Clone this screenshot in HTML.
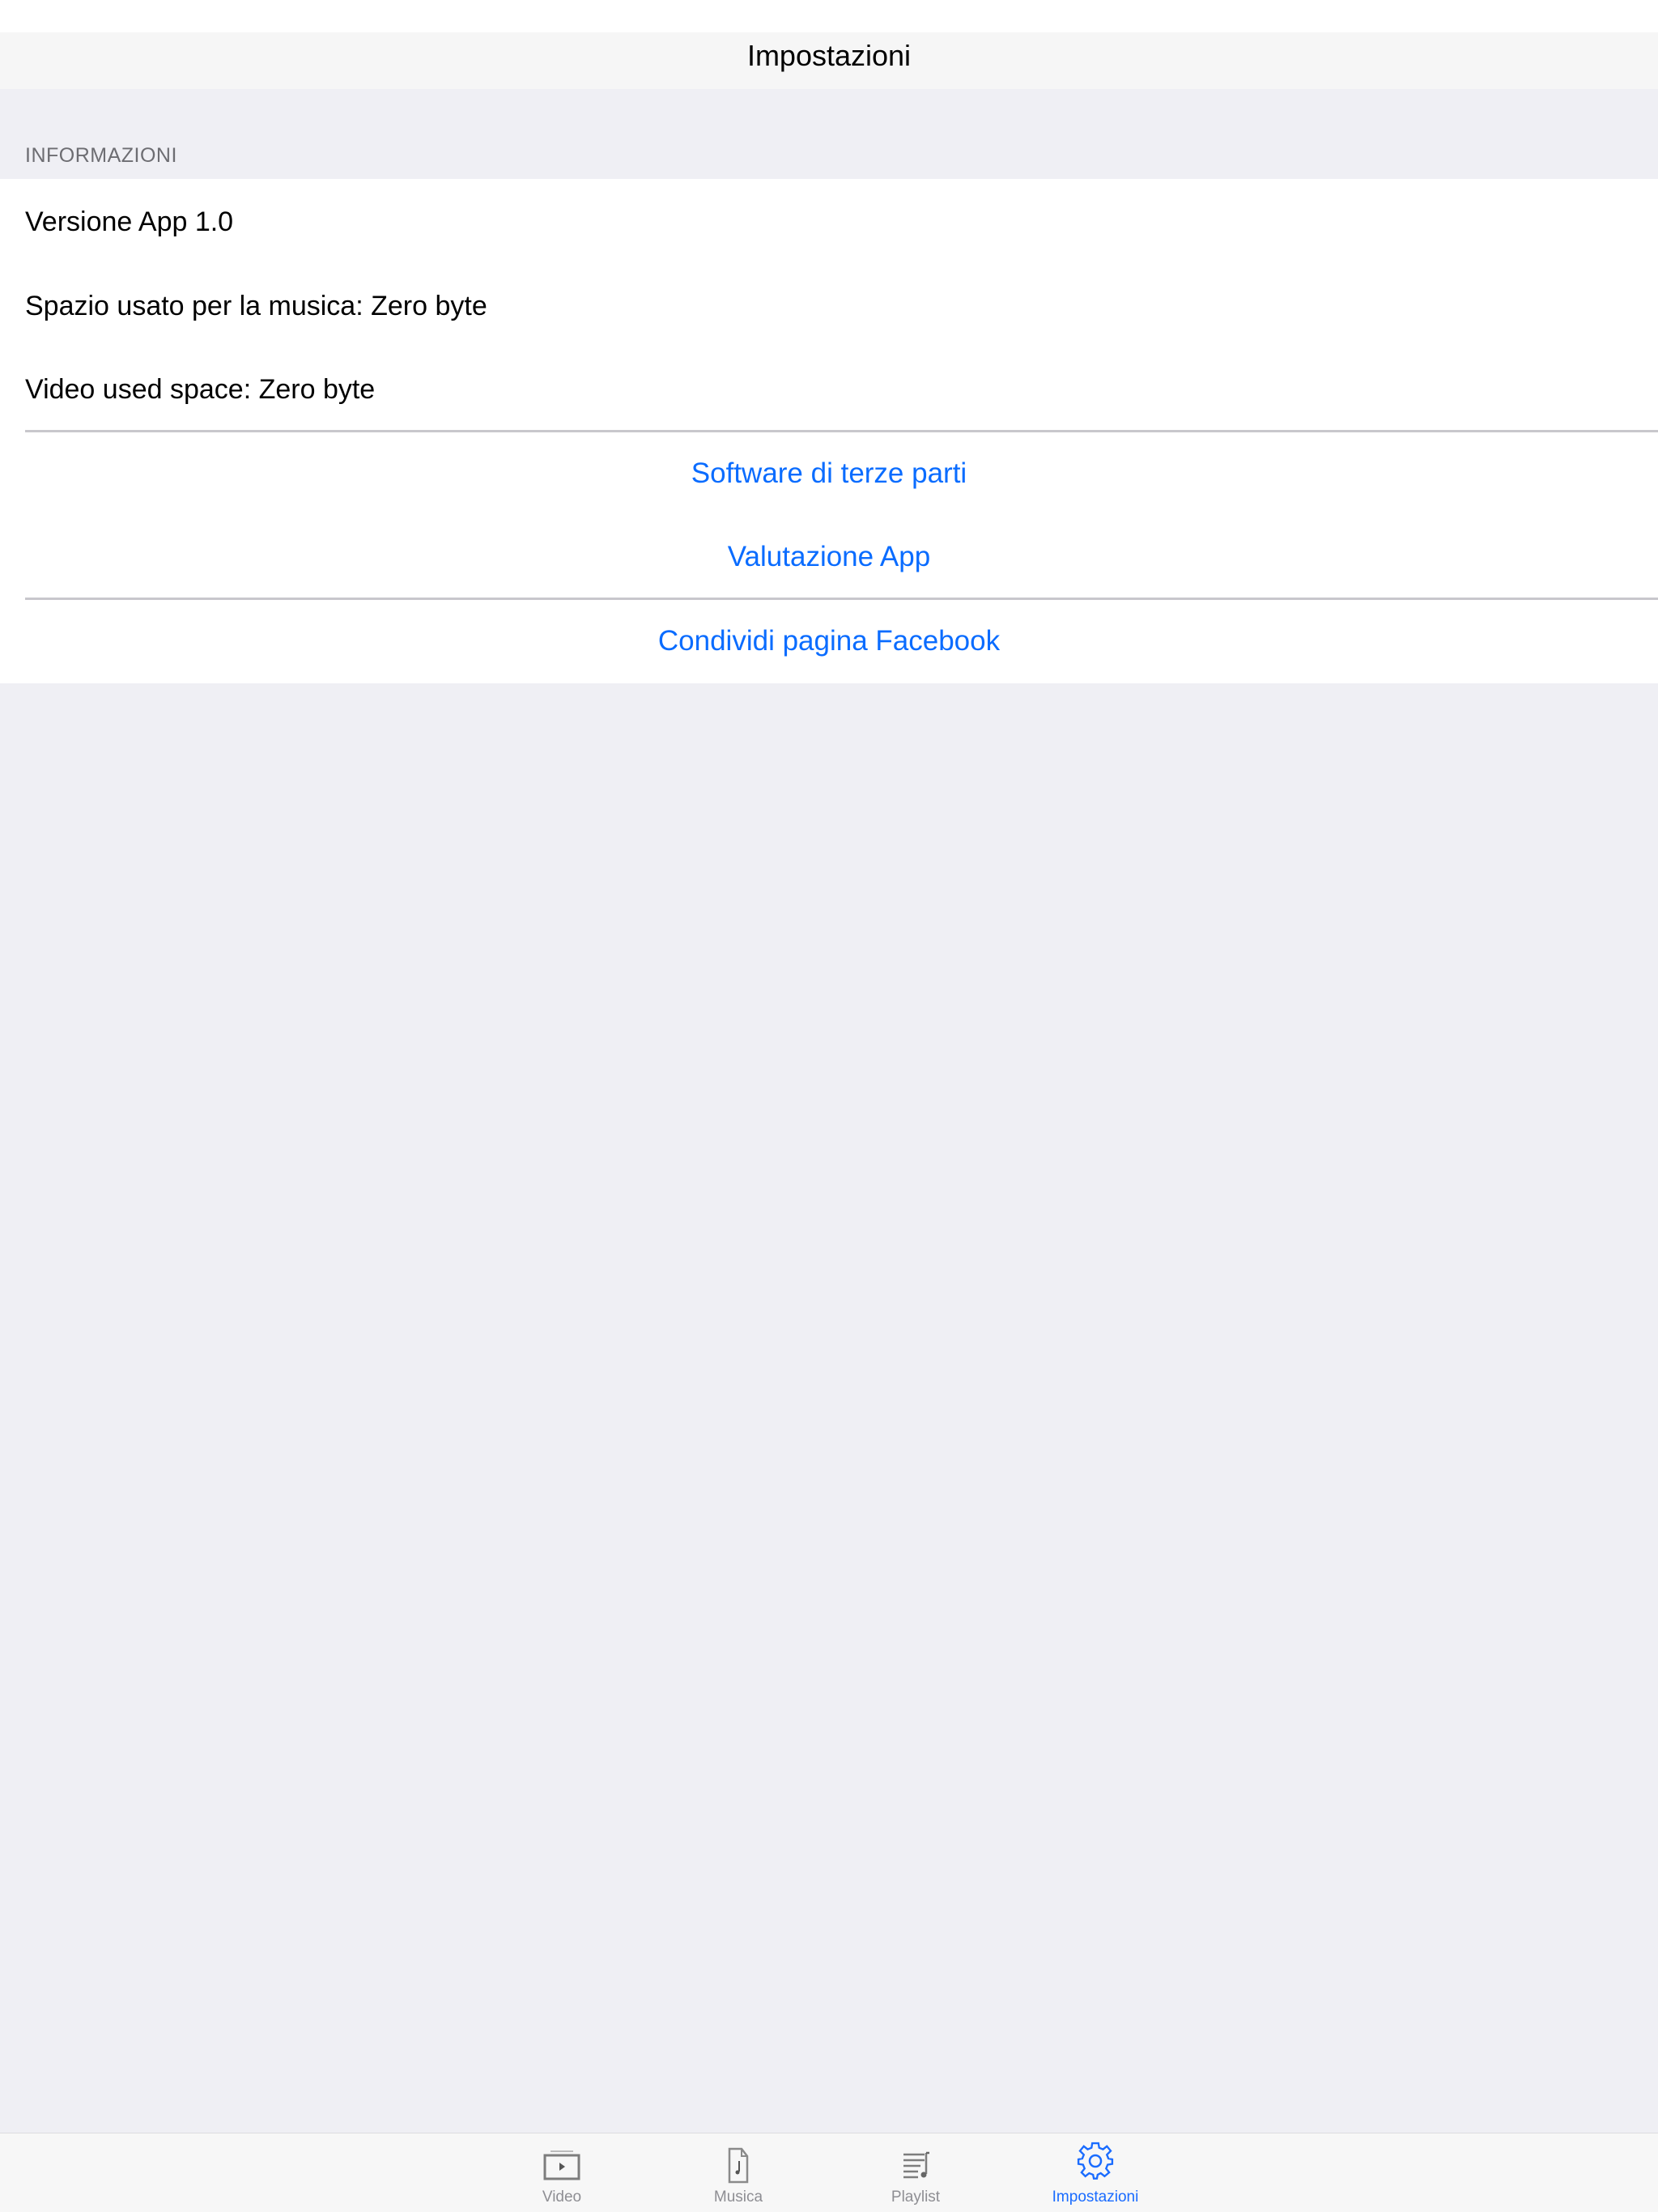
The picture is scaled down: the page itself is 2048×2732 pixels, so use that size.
<!DOCTYPE html>
<html><head><meta charset="utf-8">
<style>
*{margin:0;padding:0;box-sizing:border-box}
html,body{width:2048px;height:2732px;overflow:hidden}
body{background:#efeff4;font-family:"Liberation Sans",sans-serif;position:relative}
.status{position:absolute;left:0;top:0;width:2048px;height:40px;background:#fff}
.nav{position:absolute;left:0;top:40px;width:2048px;height:70px;background:#f6f6f6}
.nav .t{position:absolute;left:0;right:0;top:-6px;line-height:70px;text-align:center;font-size:36px;color:#000}
.hdr{position:absolute;left:31px;top:178px;font-size:25px;color:#6d6d72;letter-spacing:0.5px}
.group{position:absolute;left:0;top:221px;width:2048px;height:623px;background:#fff}
.row{position:absolute;left:0;width:2048px;height:103px;line-height:107px;font-size:34px;color:#000;padding-left:31px}
.link{text-align:center;padding-left:0;color:#0a6cff;line-height:103px;font-size:35px}
.sep{position:absolute;left:31px;right:0;height:3px;background:#c8c7cc}
.tab{position:absolute;left:0;top:2634px;width:2048px;height:98px;background:#f7f7f7;border-top:1px solid #dcdce0}
.ti{position:absolute;top:0;width:200px;height:98px;text-align:center}
.ti svg{position:absolute;left:70px;top:10px}
.ti span{position:absolute;left:0;right:0;top:68px;font-size:19px;color:#8e8e93}
</style></head><body>
<div class="status"></div>
<div class="nav"><div class="t">Impostazioni</div></div>
<div class="hdr">INFORMAZIONI</div>
<div class="group">
<div class="row" style="top:0">Versione App 1.0</div>
<div class="row" style="top:104px">Spazio usato per la musica: Zero byte</div>
<div class="row" style="top:207px">Video used space: Zero byte</div>
<div class="sep" style="top:310px"></div>
<div class="row link" style="top:312px">Software di terze parti</div>
<div class="row link" style="top:415px">Valutazione App</div>
<div class="sep" style="top:517px"></div>
<div class="row link" style="top:519px">Condividi pagina Facebook</div>
</div>
<div class="tab">
<div class="ti" style="left:594px">
<svg width="60" height="56" viewBox="0 0 60 56"><line x1="16" y1="12" x2="44" y2="12" stroke="#bbb" stroke-width="2"/><rect x="9" y="17" width="42" height="29" fill="none" stroke="#7d7d7d" stroke-width="3"/><polygon points="27,26 27,36 34,31" fill="#555"/></svg>
<span>Video</span></div>
<div class="ti" style="left:812px">
<svg width="60" height="56" viewBox="0 0 60 56"><path d="M19 9 H34 L41 18 V50 H19 Z" fill="none" stroke="#8a8a8a" stroke-width="2.5"/><path d="M34 9 V18 H41" fill="none" stroke="#8a8a8a" stroke-width="2"/><path d="M31 24 V37" stroke="#555" stroke-width="2"/><circle cx="29" cy="38" r="2.5" fill="#555"/></svg>
<span>Musica</span></div>
<div class="ti" style="left:1031px">
<svg width="60" height="56" viewBox="0 0 60 56"><g stroke="#7d7d7d" stroke-width="2.5"><line x1="15" y1="16" x2="41" y2="16"/><line x1="15" y1="23" x2="41" y2="23"/><line x1="15" y1="30" x2="36" y2="30"/><line x1="15" y1="37" x2="33" y2="37"/><line x1="15" y1="44" x2="33" y2="44"/><line x1="43" y1="14" x2="43" y2="40"/></g><circle cx="40" cy="41" r="3.5" fill="#666"/><line x1="43" y1="14" x2="47" y2="14" stroke="#666" stroke-width="2.5"/></svg>
<span>Playlist</span></div>
<div class="ti" style="left:1253px">
<svg width="60" height="56" viewBox="0 0 60 56"><g transform="translate(30,24)" fill="none" stroke="#1a6cff" stroke-width="2.5"><path d="M-4,-20 L4,-20 L5,-14 L10,-12 L15,-16 L20,-10 L15,-5 L17,0 L22,1 L22,7 L16,8 L14,13 L18,18 L12,23 L7,19 L3,21 L2,26 L-2,26 L-3,21 L-8,19 L-13,23 L-18,18 L-14,13 L-16,8 L-22,7 L-22,1 L-17,0 L-15,-5 L-20,-10 L-15,-16 L-10,-12 L-5,-14 Z" transform="translate(0,-3) scale(0.95)"/><circle cx="0" cy="0" r="7"/></g></svg>
<span style="color:#1a6cff">Impostazioni</span></div>
</div>
</body></html>
